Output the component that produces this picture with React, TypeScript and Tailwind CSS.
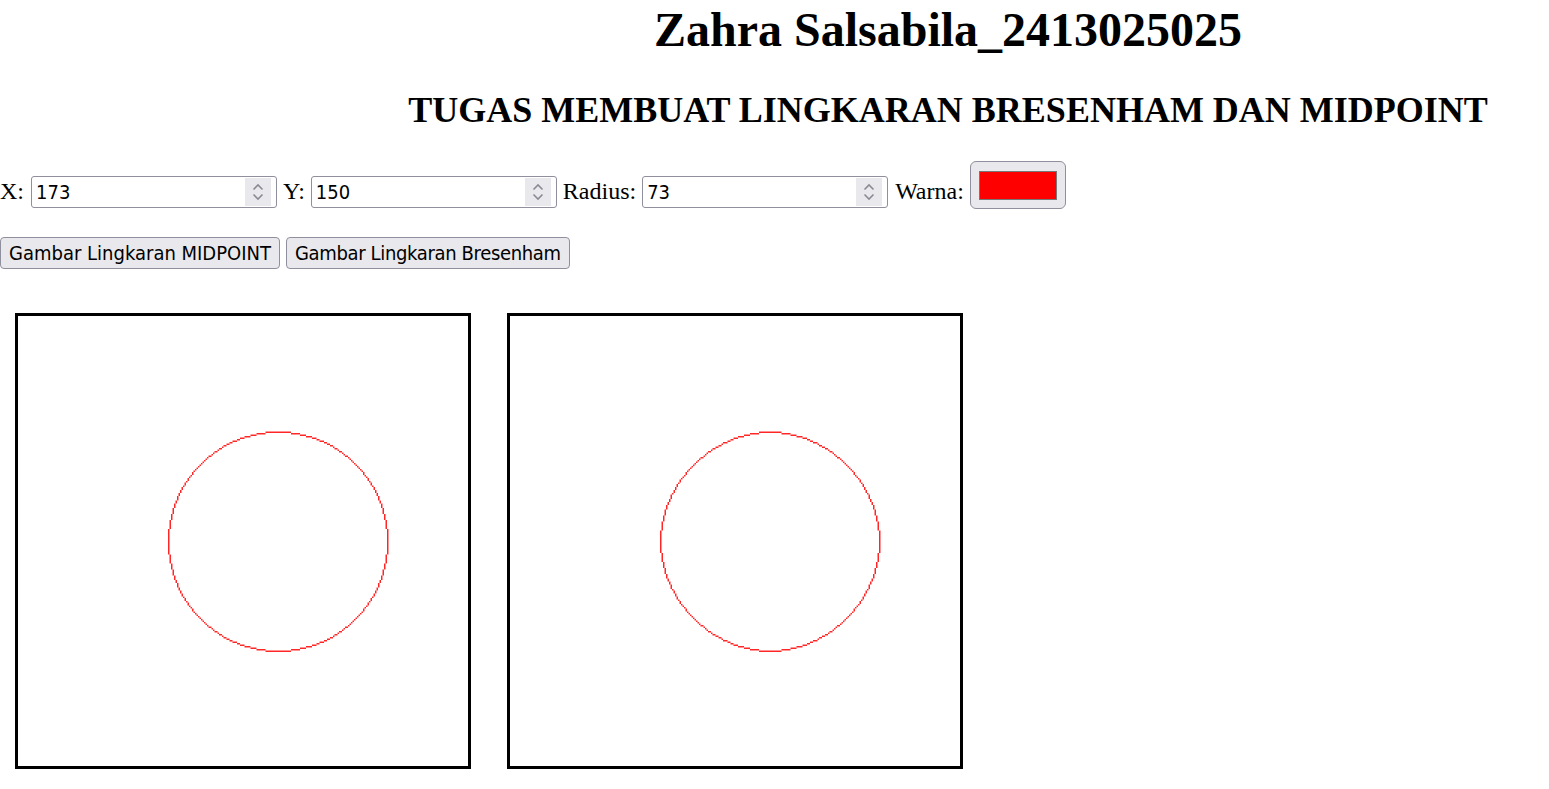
import React, { useState } from 'react';

type Pt = [number, number];

const controlFont = "font-['DejaVu_Sans_Condensed','DejaVu_Sans',sans-serif]";

function octants(xc: number, yc: number, x: number, y: number, out: Pt[]) {
  out.push(
    [xc + x, yc + y],
    [xc - x, yc + y],
    [xc + x, yc - y],
    [xc - x, yc - y],
    [xc + y, yc + x],
    [xc - y, yc + x],
    [xc + y, yc - x],
    [xc - y, yc - x]
  );
}

function midpointCircle(xc: number, yc: number, r: number): Pt[] {
  const pts: Pt[] = [];
  let x = 0;
  let y = r;
  let p = 1 - r;
  while (x <= y) {
    octants(xc, yc, x, y, pts);
    x++;
    if (p < 0) {
      p += 2 * x + 1;
    } else {
      y--;
      p += 2 * (x - y) + 1;
    }
  }
  return pts;
}

function bresenhamCircle(xc: number, yc: number, r: number): Pt[] {
  const pts: Pt[] = [];
  let x = 0;
  let y = r;
  let d = 3 - 2 * r;
  octants(xc, yc, x, y, pts);
  while (y >= x) {
    x++;
    if (d > 0) {
      y--;
      d = d + 4 * (x - y) + 10;
    } else {
      d = d + 4 * x + 6;
    }
    octants(xc, yc, x, y, pts);
  }
  return pts;
}

function CircleCanvas({ points, color }: { points: Pt[]; color: string }) {
  const d = points.map(([x, y]) => `M${x} ${y}h1v1h-1z`).join('');
  return (
    <div className="border-[3px] border-black bg-white w-[456px] h-[456px] shrink-0">
      <svg width="450" height="450" viewBox="0 0 300 300" className="block">
        <path d={d} fill={color} fillOpacity="0.85" />
      </svg>
    </div>
  );
}

function NumberField({ value, onChange }: { value: string; onChange: (v: string) => void }) {
  return (
    <div className="flex items-center w-[246px] h-[32px] border border-[#8f8f9d] rounded-[3px] bg-white pl-[4px] pr-[5px] shrink-0">
      <input
        value={value}
        onChange={(e) => onChange(e.target.value)}
        className={`${controlFont} flex-1 min-w-0 text-[20px] text-black outline-none bg-transparent`}
      />
      <div className="w-[26px] h-[28px] bg-[#e9e9ed] flex flex-col items-center justify-center gap-[2px]">
        <svg width="12" height="8" viewBox="0 0 12 8">
          <path d="M1.5 6.5 L6 2 L10.5 6.5" fill="none" stroke="#8a8a95" strokeWidth="1.6" />
        </svg>
        <svg width="12" height="8" viewBox="0 0 12 8">
          <path d="M1.5 1.5 L6 6 L10.5 1.5" fill="none" stroke="#8a8a95" strokeWidth="1.6" />
        </svg>
      </div>
    </div>
  );
}

function GrayButton({ children, tight }: { children: React.ReactNode; tight?: boolean }) {
  return (
    <button
      className={`${controlFont} ${tight ? 'tracking-[-0.35px]' : ''} h-[32px] px-[8px] text-[20px] leading-none text-black bg-[#e9e9ed] border border-[#8f8f9d] rounded-[4px] whitespace-nowrap`}
    >
      {children}
    </button>
  );
}

export default function App() {
  const [x, setX] = useState('173');
  const [y, setY] = useState('150');
  const [r, setR] = useState('73');
  const color = '#ff0000';

  const xc = parseInt(x) || 0;
  const yc = parseInt(y) || 0;
  const rad = parseInt(r) || 0;

  return (
    <div className="min-h-screen w-full bg-white text-black font-['Liberation_Serif','Times_New_Roman',serif] text-[24px]">
      <div className="pl-[347px] text-center">
        <h1 className="pt-[6px] text-[48px] leading-[48px] font-bold whitespace-nowrap">Zahra Salsabila_2413025025</h1>
        <h2 className="mt-[38px] text-[36px] leading-[36px] font-bold whitespace-nowrap">
          TUGAS MEMBUAT LINGKARAN BRESENHAM DAN MIDPOINT
        </h2>
      </div>

      <div className="mt-[33px] flex items-start">
        <span className="mt-[18px] leading-[24px] mr-[7px]">X:</span>
        <div className="mt-[15px]">
          <NumberField value={x} onChange={setX} />
        </div>
        <span className="mt-[18px] leading-[24px] mx-[6px]">Y:</span>
        <div className="mt-[15px]">
          <NumberField value={y} onChange={setY} />
        </div>
        <span className="mt-[18px] leading-[24px] mx-[6px]">Radius:</span>
        <div className="mt-[15px]">
          <NumberField value={r} onChange={setR} />
        </div>
        <span className="mt-[18px] leading-[24px] ml-[7px] mr-[6px]">Warna:</span>
        <div className="w-[96px] h-[48px] bg-[#e9e9ed] border border-[#8f8f9d] rounded-[6px] flex items-center justify-center">
          <div className="w-[78px] h-[29px] border-[1.5px] border-[#777777] bg-[#ff0000]" />
        </div>
      </div>

      <div className="mt-[28px] flex gap-[6px]">
        <GrayButton>Gambar Lingkaran MIDPOINT</GrayButton>
        <GrayButton tight>Gambar Lingkaran Bresenham</GrayButton>
      </div>

      <div className="mt-[44px] pl-[15px] flex gap-[36px]">
        <CircleCanvas points={midpointCircle(xc, yc, rad)} color={color} />
        <CircleCanvas points={bresenhamCircle(xc, yc, rad)} color={color} />
      </div>
    </div>
  );
}
